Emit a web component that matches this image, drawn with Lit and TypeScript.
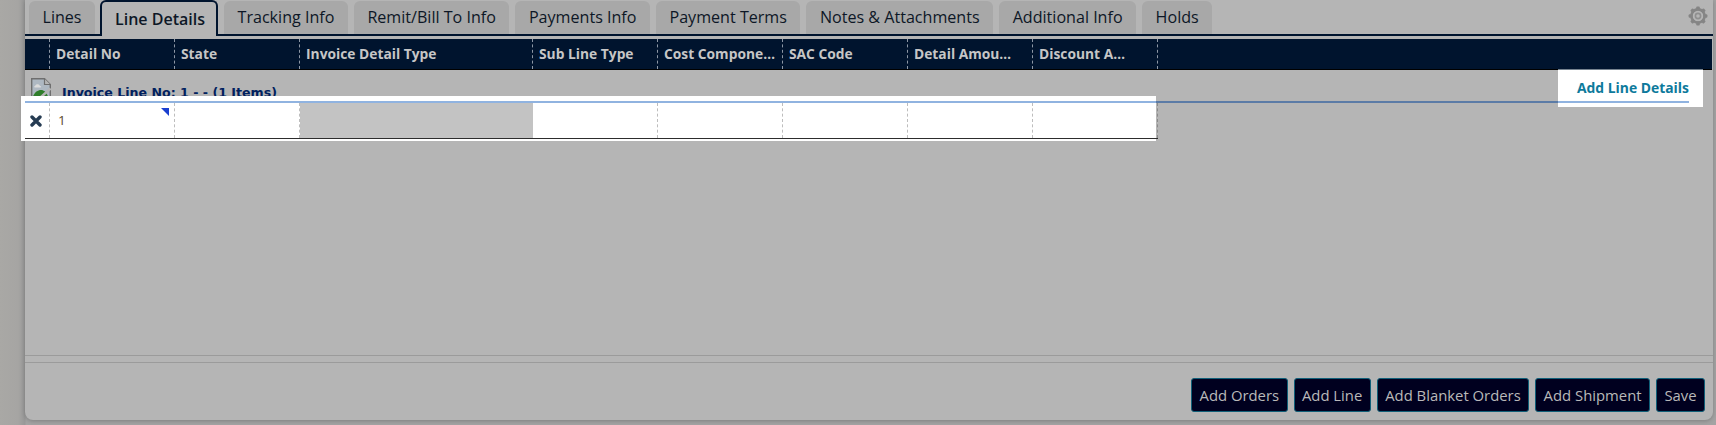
import { LitElement, html, css, svg } from "lit";
import { customElement } from "lit/decorators.js";

const TABS = ["Lines", "Line Details", "Tracking Info", "Remit/Bill To Info", "Payments Info", "Payment Terms", "Notes & Attachments", "Additional Info", "Holds"];
const COLS = ["Detail No", "State", "Invoice Detail Type", "Sub Line Type", "Cost Compone…", "SAC Code", "Detail Amou…", "Discount A…"];
const BTNS = ["Add Orders", "Add Line", "Add Blanket Orders", "Add Shipment", "Save"];

const gear = () => {
  const teeth = [0, 45, 90, 135, 180, 225, 270, 315].map(
    (a) => svg`<rect x="8.2" y="0.6" width="3.6" height="4" rx="1" fill="#858585" transform="rotate(${a} 10 10)"></rect>`
  );
  return html`<svg class="gear" width="20" height="20" viewBox="0 0 20 20">
    ${teeth}
    <circle cx="10" cy="10" r="6.6" fill="none" stroke="#858585" stroke-width="2.6"></circle>
    <circle cx="10" cy="10" r="2.6" fill="none" stroke="#8f8f8f" stroke-width="1.6"></circle>
  </svg>`;
};

@customElement("app-root")
export class AppRoot extends LitElement {
  static styles = css`
    :host {
      display: block;
      width: 1716px;
      height: 425px;
      overflow: hidden;
      background: linear-gradient(to right, #a9a8a5 0, #a6a5a3 18px, #989898 25px, #a3a3a3 26px);
      font-family: "Open Sans", "Liberation Sans", sans-serif;
    }
    .panel {
      margin-left: 25px;
      width: 1688px;
      height: 420px;
      box-sizing: border-box;
      background: #b5b5b5;
      border-radius: 0 0 8px 8px;
      box-shadow: 0 1px 4px rgba(0, 0, 0, 0.22);
      display: flex;
      flex-direction: column;
    }
    .tabs {
      display: flex;
      gap: 6px;
      height: 34px;
      padding-left: 4px;
      border-bottom: 2px solid #00142e;
      align-items: flex-start;
    }
    .tab {
      height: 33px;
      margin-top: 1px;
      box-sizing: border-box;
      padding: 0 13.5px;
      background: #a8a8a8;
      border-radius: 6px 6px 0 0;
      font-size: 16.1px;
      line-height: 33px;
      color: #0d1726;
      white-space: nowrap;
    }
    .tab.on {
      height: 36px;
      margin: 0 0 0 -1px;
      padding: 0 11px 0 13px;
      background: #b5b5b5;
      border: 2px solid #00142e;
      border-bottom: 0;
      font-size: 16px;
      font-weight: 600;
      line-height: 35px;
      position: relative;
    }
    .gear {
      margin: 6px 5px 0 auto;
      flex: none;
    }
    .grid-head,
    .row {
      display: grid;
      grid-template-columns: 25px 125px 125px 233px 125px 125px 125px 125px 125px;
    }
    .head-bar {
      margin-top: 3px;
      height: 31px;
      box-sizing: border-box;
      background: #00142e;
      border-bottom: 1px solid #000;
      margin-right: 1px;
    }
    .hc {
      height: 30px;
      box-sizing: border-box;
      border-right: 1px dashed #8d97a5;
      padding: 0 6px;
      font-size: 13.8px;
      font-weight: 700;
      line-height: 29px;
      color: #c6c6c6;
      white-space: nowrap;
    }
    .group {
      position: relative;
      height: 69px;
    }
    .heading {
      display: flex;
      height: 33px;
      padding: 0 10px 0 6px;
      align-items: flex-start;
    }
    .broken {
      flex: none;
      margin-top: 8px;
    }
    .title {
      margin: 15px 0 0 11px;
      font-family: "DejaVu Sans", sans-serif;
      font-size: 12.6px;
      font-weight: 700;
      line-height: 16px;
      color: #00205e;
      white-space: nowrap;
    }
    .add {
      margin-left: auto;
      width: 145px;
      height: 37px;
      box-sizing: border-box;
      background: #fff;
      box-shadow: 0 -1px 0 #76838f;
      padding: 8px 14px 0 0;
      text-align: right;
      font-size: 13.9px;
      font-weight: 700;
      line-height: 20px;
      color: #0d7a9c;
      position: relative;
      z-index: 1;
    }
    .halo {
      position: absolute;
      left: -4px;
      width: 1135px;
      top: 26px;
      height: 45px;
      background: #fff;
      z-index: 1;
    }
    .rule {
      position: absolute;
      left: 0;
      top: 31px;
      right: 24px;
      height: 2px;
      z-index: 2;
      background: linear-gradient(to right, #90b3e0 0 1131px, #5b7ba6 1131px 1533px, #90b3e0 1533px);
    }
    .row {
      position: relative;
      z-index: 2;
      height: 36px;
      width: 1133px;
      box-sizing: border-box;
      border-bottom: 1px solid #2d2d2d;
    }
    .c {
      position: relative;
      box-sizing: border-box;
      border-right: 1px dashed #bdbdbd;
      padding-left: 8px;
      font-size: 13.5px;
      line-height: 35px;
      color: #5b4a2c;
    }
    .c.off {
      background: #c3c3c3;
      border-right: 0;
    }
    .c.last {
      border-right-color: #8a8a8a;
    }
    .x {
      padding: 0 2px 0 0;
      display: flex;
      align-items: center;
      justify-content: center;
    }
    .tri {
      position: absolute;
      top: 5px;
      right: 5px;
      width: 0;
      height: 0;
      border-top: 8px solid #1a3fd0;
      border-left: 8px solid transparent;
    }
    .spacer {
      flex: 1;
    }
    .sep {
      height: 1px;
      background: #9b9b9b;
    }
    .sep + .sep {
      margin-top: 6px;
    }
    .foot {
      display: flex;
      justify-content: flex-end;
      gap: 6px;
      padding: 15px 8px 8px 0;
    }
    .btn {
      height: 34px;
      box-sizing: border-box;
      border: 1px solid #0f5f78;
      border-radius: 3px;
      background: #00001f;
      color: #b9b9b9;
      padding: 0 7.45px;
      font-family: inherit;
      font-size: 14.85px;
      line-height: 32px;
      white-space: nowrap;
    }
  `;

  render() {
    return html`<div class="panel">
      <div class="tabs">
        ${TABS.map((t, i) => html`<div class="tab ${i === 1 ? "on" : ""}">${t}</div>`)}
        ${gear()}
      </div>
      <div class="head-bar">
        <div class="grid-head">
          <div class="hc"></div>
          ${COLS.map((c) => html`<div class="hc">${c}</div>`)}
        </div>
      </div>
      <div class="group">
        <div class="heading">
          <svg class="broken" width="20" height="20" viewBox="0 0 20 20">
            <path d="M0.7 0.7H13.5L19.3 6.5V19.3H0.7Z" fill="#aeb8c2" stroke="#6e6e6e" stroke-width="1.4"></path>
            <path d="M13.5 0.7V6.5H19.3" fill="#b5b5b5" stroke="#6e6e6e" stroke-width="1.2"></path>
            <path d="M4 8c1-2.4 4-2.4 5 0 1.2 0 1.6 1.4.4 1.4H4C2.8 9.4 3 8 4 8Z" fill="#dcdcdc"></path>
            <path d="M2 18.5c1.5-4.5 5-6.6 8-6.6 3 0 5.5 2 7 6.6Z" fill="#2f7d2a"></path>
            <path d="M9.5 19.5 19.5 10.5" stroke="#b5b5b5" stroke-width="2.4"></path>
          </svg>
          <div class="title">Invoice Line No: 1 - - (1 Items)</div>
          <div class="add">Add Line Details</div>
        </div>
        <div class="halo"></div>
        <div class="rule"></div>
        <div class="row">
          <div class="c x">
            <svg width="12" height="12" viewBox="0 0 12 12">
              <path d="M2 2 10 10M10 2 2 10" stroke="#253b52" stroke-width="3.4" stroke-linecap="round"></path>
            </svg>
          </div>
          <div class="c">1<span class="tri"></span></div>
          <div class="c"></div>
          <div class="c off"></div>
          <div class="c"></div>
          <div class="c"></div>
          <div class="c"></div>
          <div class="c"></div>
          <div class="c last"></div>
        </div>
      </div>
      <div class="spacer"></div>
      <div class="sep"></div>
      <div class="sep"></div>
      <div class="foot">
        ${BTNS.map((b) => html`<button class="btn">${b}</button>`)}
      </div>
    </div>`;
  }
}
